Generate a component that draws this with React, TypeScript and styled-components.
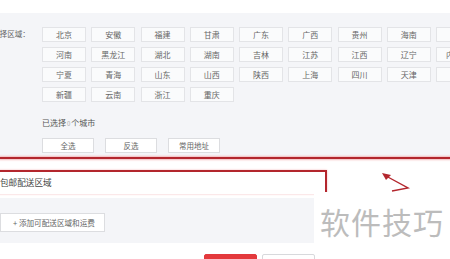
import React from 'react';
import styled, { createGlobalStyle } from 'styled-components';

const GlobalStyle = createGlobalStyle`
  html, body {
    margin: 0;
    padding: 0;
    background: #ffffff;
  }
  body {
    font-family: "Noto Sans CJK SC", "Noto Sans", sans-serif;
  }
`;

const Page = styled.div`
  position: relative;
  width: 450px;
  height: 259px;
  overflow: hidden;
  background: #fff;
  display: flex;
  flex-direction: column;
`;

const TopStrip = styled.div`
  height: 13px;
  flex: none;
  background: #fff;
`;

const RegionPanel = styled.section`
  height: 144px;
  flex: none;
  box-sizing: border-box;
  background: #f4f5f8;
  padding-top: 14px;
  display: flex;
  flex-direction: column;
`;

const RegionRow = styled.div`
  display: flex;
  align-items: flex-start;
`;

const Label = styled.div`
  width: 50px;
  flex: none;
  margin-left: -8px;
  padding-top: 2px;
  font-size: 7.6px;
  line-height: 10px;
  color: #666;
  white-space: nowrap;
`;

const ProvinceGrid = styled.div`
  display: grid;
  grid-template-columns: repeat(9, 44px);
  grid-auto-rows: 15px;
  column-gap: 5.25px;
  row-gap: 5px;
  flex: none;
`;

const Province = styled.div`
  box-sizing: border-box;
  border: 1px solid #e3e4e7;
  background: #fafbfc;
  font-size: 8px;
  line-height: 13px;
  color: #666;
  text-align: center;
  white-space: nowrap;
`;

const Selected = styled.div`
  margin: 15px 0 0 42px;
  font-size: 8px;
  line-height: 12px;
  color: #555;

  span {
    color: #aaa;
    font-size: 6px;
    margin: 0 1px;
  }
`;

const ActionRow = styled.div`
  display: flex;
  gap: 11px;
  margin: 8px 0 0 42px;
`;

const ActionButton = styled.div`
  box-sizing: border-box;
  width: 52px;
  height: 15px;
  border: 1px solid #dcdde0;
  background: #fff;
  font-size: 7.5px;
  line-height: 13px;
  text-align: center;
  color: #666;
`;

const RedLine = styled.div`
  height: 2px;
  flex: none;
  background: #b3262d;
  box-shadow: 0 0 2px 1px #f3b9bb;
`;

const Heading = styled.div`
  height: 39px;
  flex: none;
  box-sizing: border-box;
  padding-top: 17px;
  font-size: 8.6px;
  line-height: 12px;
  color: #444;
  white-space: nowrap;
`;

const AddSection = styled.div`
  height: 45px;
  flex: none;
  box-sizing: border-box;
  background: #f4f5f8;
  padding-top: 15px;
`;

const AddButton = styled.div`
  box-sizing: border-box;
  width: 105px;
  height: 19px;
  border: 1px solid #dcdde0;
  background: #fff;
  padding-left: 12px;
  font-size: 7.6px;
  line-height: 17px;
  color: #666;
  white-space: nowrap;
`;

const Footer = styled.div`
  flex: 1;
  display: flex;
  gap: 5px;
  padding: 11px 0 0 204px;
`;

const FooterButton = styled.div<{ $primary?: boolean }>`
  box-sizing: border-box;
  width: 53px;
  height: 16px;
  border-radius: 2px;
  border: 1px solid ${(p) => (p.$primary ? '#e2383d' : '#d8d9dc')};
  background: ${(p) => (p.$primary ? '#e4393c' : '#fff')};
`;

const Annotation = styled.div`
  position: absolute;
  left: -4px;
  top: 170px;
  width: 331px;
  height: 24px;
  box-sizing: border-box;
  border: 2px solid #b3262d;
  border-bottom: none;
  box-shadow: 0 0 2px #f3b9bb;
`;

const Arrow = styled.svg`
  position: absolute;
  left: 378px;
  top: 170px;
`;

const Watermark = styled.div`
  position: absolute;
  left: 314px;
  top: 192px;
  width: 136px;
  height: 58px;
  background: #fff;
  display: flex;
  align-items: center;
  justify-content: center;
  font-size: 30px;
  letter-spacing: 1px;
  color: #bcbcbc;
  white-space: nowrap;
`;

const provinces = [
  '北京', '安徽', '福建', '甘肃', '广东', '广西', '贵州', '海南', '河北',
  '河南', '黑龙江', '湖北', '湖南', '吉林', '江苏', '江西', '辽宁', '内蒙古',
  '宁夏', '青海', '山东', '山西', '陕西', '上海', '四川', '天津', '西藏',
  '新疆', '云南', '浙江', '重庆',
];

export default function App() {
  return (
    <>
      <GlobalStyle />
      <Page>
        <TopStrip />
        <RegionPanel>
          <RegionRow>
            <Label>选择区域：</Label>
            <ProvinceGrid>
              {provinces.map((p) => (
                <Province key={p}>{p}</Province>
              ))}
            </ProvinceGrid>
          </RegionRow>
          <Selected>
            已选择<span>0</span>个城市
          </Selected>
          <ActionRow>
            <ActionButton>全选</ActionButton>
            <ActionButton>反选</ActionButton>
            <ActionButton>常用地址</ActionButton>
          </ActionRow>
        </RegionPanel>
        <RedLine />
        <Heading>包邮配送区域</Heading>
        <AddSection>
          <AddButton>+ 添加可配送区域和运费</AddButton>
        </AddSection>
        <Footer>
          <FooterButton $primary />
          <FooterButton />
        </Footer>

        <Annotation />
        <Arrow width="40" height="26" viewBox="0 0 40 26">
          <path d="M8 6 L30 18 L14 21" fill="none" stroke="#b3262d" strokeWidth="1.4" />
          <path d="M4 3 L13 5 L8 10 Z" fill="#b3262d" />
        </Arrow>
        <Watermark>软件技巧</Watermark>
      </Page>
    </>
  );
}
